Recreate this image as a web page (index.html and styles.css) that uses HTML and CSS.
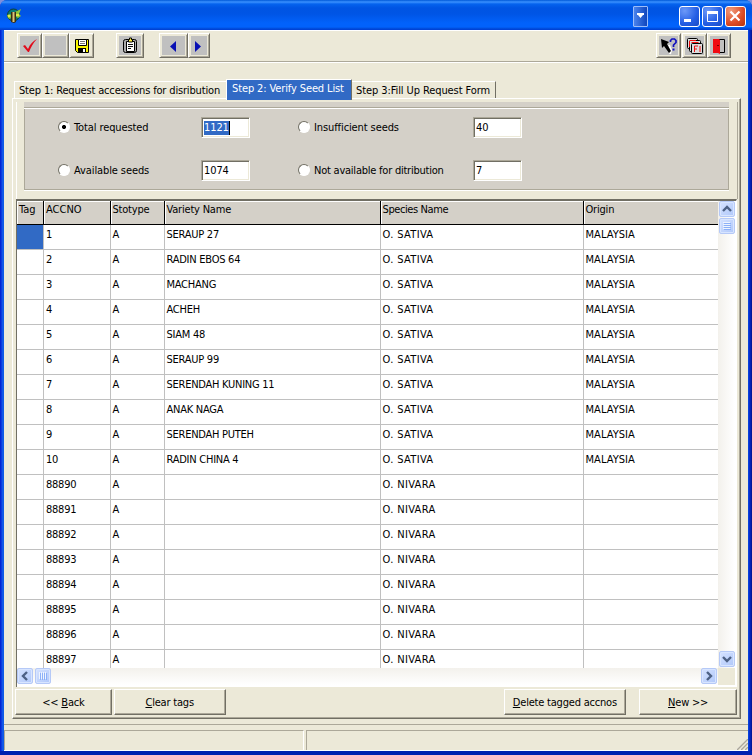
FILE: index.html
```
<!DOCTYPE html>
<html lang="en">
<head>
<meta charset="utf-8">
<title>Verify Seed List</title>
<link rel="stylesheet" href="styles.css">
</head>
<body>
<div class="window">
  <header class="titlebar">
    <svg class="logo" width="17" height="17" viewBox="0 0 17 17"><circle cx="7.500" cy="8" r="6" fill="#087c79" stroke="#123d31"/><path d="M1 8l3-1 2 2-2 3-2-1zM9 5l6-3-2 5 2 2-3 2-3-2z" fill="#8fc53c"/><path d="M2 8h2v2H2zM10 7h3v2h-3z" fill="#e0e84a"/><path d="M5 5h5v10l-2 1-3-1z" fill="#3a2c12"/><path d="M7.500 5v10" stroke="#d8c47a" stroke-width="2"/></svg>
    <span class="drop"><svg width="15" height="20"><path d="M3 6h7v2H9L6.500 11 4 8H3z" fill="#fff"/></svg></span>
    <span class="winbtn first"><svg width="19" height="19"><path d="M4 12h7v3H4z" fill="#fff"/></svg></span>
    <span class="winbtn"><svg width="19" height="19"><path d="M4.500 5.500h10v9h-10z" fill="none" stroke="#fff"/><path d="M4 4h11v3H4z" fill="#fff"/></svg></span>
    <span class="winbtn close"><svg width="19" height="19"><path d="M4.500 4.500l9 9m0-9l-9 9" stroke="#fff" stroke-width="2.200"/></svg></span>
  </header>
  <main class="client">
    <div class="toolbar">
      <span class="tool t1"><svg width="20" height="20"><path d="M3 10l2-1 3 4c2-5 5-8 9-10-4 4-6 8-8 13H8z" fill="#e10b1b"/></svg></span>
      <span class="tool t2"></span>
      <span class="tool t3"><svg width="18" height="20"><path d="M2.500 3.500h13v13h-11l-2-2z" fill="#f8f500" stroke="#000"/><path d="M5.500 3.500h8v6h-8z" fill="#fff" stroke="#000"/><path d="M7 5.500h5M7 7.500h5" stroke="#777"/><path d="M5 12h8v4H5z" fill="#000"/><path d="M10 13h2v3h-2z" fill="#fff"/></svg></span>
      <span class="tool t4"><svg width="20" height="20"><rect x="3.500" y="3.500" width="13" height="13" rx="2" fill="#aaa" stroke="#000"/><path d="M6.500 5.500h8v10h-8z" fill="#fff" stroke="#000"/><path d="M8.500 5V3.500h1V2h2v1.500h1V6h-4z" fill="#ffee45" stroke="#000"/><path d="M8 8.500h5M8 10.500h5M8 12.500h3" stroke="#111"/></svg></span>
      <span class="tool t5"><svg width="20" height="20"><path d="M12 5v11l-6-5.500z" fill="#0810b4"/></svg></span>
      <span class="tool t6"><svg width="20" height="20"><path d="M6 5v11l6-5.500z" fill="#0810b4"/></svg></span>
      <span class="tool t7"><svg width="22" height="20"><path d="M11 9l2 5-1 4" fill="none" stroke="#fff" stroke-width="2"/><path d="M3 3l8 3-2 2 4 7-2 2-5-7-2 2z" fill="#000"/><path d="M12.500 6V4.500l1.500-1.500h2.500L18 4.500v2L15.500 9v2" fill="none" stroke="#1010c0" stroke-width="1.700"/><path d="M14.500 12.500h2v2h-2z" fill="#1010c0"/></svg></span>
      <span class="tool t8"><svg width="20" height="20"><g fill="#ddd" stroke="#000"><rect x="2.500" y="2.500" width="10" height="10" rx="1"/><rect x="4.500" y="4.500" width="11" height="11" rx="1"/><rect x="6.500" y="7.500" width="11" height="10" rx="1"/></g><path d="M5 4.500h6M4.500 5v6M6.500 6.500h7" stroke="#e11" fill="none"/><path d="M9.500 16v-6H13m-3.500 3H12m3-3v6" stroke="#e11" fill="none"/></svg></span>
      <span class="tool t9"><svg width="20" height="20"><path d="M5.500 3.500h10v13h-10z" fill="#c0c0c0" stroke="#000"/><path d="M4 3h6l1 1v14l-2-1H4z" fill="#f00b12"/><path d="M8 9.500h2" stroke="#720000"/></svg></span>
    </div>
    <nav class="tabs">
      <span class="tab one"><b class="w1">Step 1: Request accessions for disribution</b></span>
      <span class="tab active"><b class="w2">Step 2: Verify Seed List</b></span>
      <span class="tab three"><b class="w3">Step 3:Fill Up Request Form</b></span>
    </nav>
    <section class="page">
      <div class="panel">
        <div class="summary">
          <fieldset class="filters">
            <label><i class="radio on"></i>Total requested</label><span class="field"><mark>1121</mark></span>
            <label><i class="radio"></i>Insufficient seeds</label><span class="field">40</span>
            <label><i class="radio"></i>Available seeds</label><span class="field">1074</span>
            <label class="long"><i class="radio"></i>Not available for ditribution</label><span class="field">7</span>
          </fieldset>
        </div>
        <div class="grid">
          <div class="viewport">
          <table>
            <colgroup><col class="c1"><col class="c2"><col class="c3"><col class="c4"><col class="c5"><col class="c6"></colgroup>
            <thead><tr><th>Tag<th>ACCNO<th>Stotype<th>Variety Name<th>Species Name<th>Origin</tr></thead>
            <tbody>
            <tr><td class="picked"><td>1<td>A<td>SERAUP 27<td>O. SATIVA<td>MALAYSIA</tr>
            <tr><td><td>2<td>A<td>RADIN EBOS 64<td>O. SATIVA<td>MALAYSIA</tr>
            <tr><td><td>3<td>A<td>MACHANG<td>O. SATIVA<td>MALAYSIA</tr>
            <tr><td><td>4<td>A<td>ACHEH<td>O. SATIVA<td>MALAYSIA</tr>
            <tr><td><td>5<td>A<td>SIAM 48<td>O. SATIVA<td>MALAYSIA</tr>
            <tr><td><td>6<td>A<td>SERAUP 99<td>O. SATIVA<td>MALAYSIA</tr>
            <tr><td><td>7<td>A<td>SERENDAH KUNING 11<td>O. SATIVA<td>MALAYSIA</tr>
            <tr><td><td>8<td>A<td>ANAK NAGA<td>O. SATIVA<td>MALAYSIA</tr>
            <tr><td><td>9<td>A<td>SERENDAH PUTEH<td>O. SATIVA<td>MALAYSIA</tr>
            <tr><td><td>10<td>A<td>RADIN CHINA 4<td>O. SATIVA<td>MALAYSIA</tr>
            <tr><td><td>88890<td>A<td><td>O. NIVARA<td></tr>
            <tr><td><td>88891<td>A<td><td>O. NIVARA<td></tr>
            <tr><td><td>88892<td>A<td><td>O. NIVARA<td></tr>
            <tr><td><td>88893<td>A<td><td>O. NIVARA<td></tr>
            <tr><td><td>88894<td>A<td><td>O. NIVARA<td></tr>
            <tr><td><td>88895<td>A<td><td>O. NIVARA<td></tr>
            <tr><td><td>88896<td>A<td><td>O. NIVARA<td></tr>
            <tr><td><td>88897<td>A<td><td>O. NIVARA<td></tr>
            </tbody>
          </table>
          </div>
          <div class="vscroll">
            <span class="sb"><svg width="14" height="14"><path d="M3 9l4-4 4 4" class="arrow"/></svg></span>
            <span class="sb thumb"><svg width="14" height="14"><path d="M3 3.500h7M3 5.500h7M3 7.500h7M3 9.500h7" stroke="#eef4fe"/><path d="M4 4.500h7M4 6.500h7M4 8.500h7M4 10.500h7" stroke="#8cb0f8"/></svg></span>
            <span class="sb last"><svg width="14" height="14"><path d="M3 5l4 4 4-4" class="arrow"/></svg></span>
          </div>
          <div class="hscroll">
            <span class="sb"><svg width="14" height="14"><path d="M9 3L5 7l4 4" class="arrow"/></svg></span>
            <span class="sb thumb"><svg width="14" height="14"><path d="M3.500 3v7M5.500 3v7M7.500 3v7M9.500 3v7" stroke="#eef4fe"/><path d="M4.500 4v7M6.500 4v7M8.500 4v7M10.500 4v7" stroke="#8cb0f8"/></svg></span>
            <span class="sb last"><svg width="14" height="14"><path d="M5 3l4 4-4 4" class="arrow"/></svg></span>
          </div>
          <div class="corner"></div>
        </div>
      </div>
      <div class="actions">
        <button class="back">&lt;&lt; <u>B</u>ack</button>
        <button class="clear"><u>C</u>lear tags</button>
        <button class="delete"><u>D</u>elete tagged accnos</button>
        <button class="new"><u>N</u>ew &gt;&gt;</button>
      </div>
    </section>
    <footer class="status">
      <span class="left"></span><span class="right"><svg width="13" height="13"><path d="M1 13L13 1M5 13l8-8M9 13l4-4" stroke="#fff"/><path d="M2 13L13 2M6 13l7-7M10 13l3-3" stroke="#aca899" stroke-width="1.500"/></svg></span>
    </footer>
  </main>
</div>
</body>
</html>
```
FILE: styles.css
```
* { box-sizing: border-box; }
body { margin: 0; background: #7f8fdc; color: #000; font: 11px/13px "DejaVu Sans Condensed", "DejaVu Sans", sans-serif; letter-spacing: -0.2px; font-stretch: condensed; }
svg { display: block; }
.window { width: 752px; height: 755px; padding: 0 4px 4px; display: flex; flex-direction: column; border-radius: 7px 7px 0 0; background: linear-gradient(90deg, #0019cf, #1661ed 3px, #0855dd 4px, #0855dd 748px, #0831d9 749px, #00138c); }
.window { box-shadow: inset 0 -4px #0020b0; }
.titlebar { height: 30px; margin: 0 -4px; padding: 6px 5px 0 6px; display: flex; align-items: flex-start; border-radius: 7px 7px 0 0; background: linear-gradient(#0058d8 0, #3b91ff 2px, #0563ee 4px, #0054e3 8px, #0055e5 14px, #0262fb 23px, #0262fb 27px, #0047d4 29px, #003dd7); }
.logo { margin-top: 1px; }
.drop { width: 15px; height: 21px; margin-left: 610px; border: 1px solid #9dbdf9; border-radius: 1px; background: linear-gradient(90deg, #4a83ed, #0f46bd); }
.winbtn { width: 21px; height: 21px; margin-left: 2px; border: 1px solid #fff; border-radius: 3px; background: radial-gradient(circle at 25% 20%, #6c99f8, #245ee4 60%, #1a4bc4); }
.winbtn.first { margin-left: 31px; }
.winbtn.close { background: radial-gradient(circle at 25% 20%, #f09b7b, #dc4b26 60%, #b5320e); }
.client { height: 721px; background: #ece9d8; display: flex; flex-direction: column; }
.toolbar { height: 32px; padding: 2px 17px 0 13px; display: flex; align-items: flex-start; border-top: 1px solid #fff; border-bottom: 1px solid #aca899; box-shadow: 0 1px #fff; margin-bottom: 1px; }
.tool { height: 25px; background: #c0c0c0; border: 1px solid; border-color: #fff #716f64 #716f64 #fff; box-shadow: inset 1px 1px #ece9d8, inset -1px -1px #aca899, inset 0 0 0 2px #ece9d8; display: flex; justify-content: center; align-items: center; }
.t1 { width: 25px; } .t2 { width: 27px; } .t3 { width: 25px; background: #ece9d8; }
.t4 { width: 28px; margin-left: 22px; } .t5 { width: 29px; margin-left: 15px; } .t6 { width: 22px; }
.t7 { width: 25px; margin-left: 446px; } .t8 { width: 25px; margin-left: 1px; } .t9 { width: 24px; }
.tabs { height: 35px; padding-left: 10px; display: flex; align-items: flex-end; }
.tab { height: 17px; padding: 2px 0 0 4px; white-space: nowrap; border-left: 1px solid #fff; border-top: 1px solid #fff; }
.tab b { font-weight: 400; }
.one { width: 212px; }
.tab.active { width: 126px; height: 21px; margin-bottom: -2px; padding-left: 5px; background: #316ac5; color: #fff; border-right: 1px solid #716f64; position: relative; }
.three { width: 144px; padding-left: 4px; border-left: 0; border-right: 1px solid #716f64; }
.w1 { letter-spacing: -0.16px; }
.w2 { letter-spacing: -0.12px; }
.w3 { letter-spacing: -0.09px; }
.page { width: 729px; height: 621px; margin-left: 8px; padding: 3px 3px 0 2px; border: 1px solid; border-color: #fff #716f64 #716f64 #fff; box-shadow: inset -1px -1px #aca899; }
.panel { width: 722px; margin-left: 1px; }
.summary { height: 97px; padding: 0 8px 0 7px; border-left: 1px solid #fff; border-right: 1px solid #aca899; }
.filters { height: 88px; margin: 0; padding: 15px 0 0 34px; border: 0; background: linear-gradient(#aca899, #aca899) 0 5px / 100% 1px no-repeat, linear-gradient(#fff, #fff) 0 6px / 100% 1px no-repeat, linear-gradient(#aca899, #aca899) 0 87px / 100% 1px no-repeat, linear-gradient(#aca899, #aca899) 0 5px / 1px 83px no-repeat, linear-gradient(#aca899, #aca899) 100% 5px / 1px 83px no-repeat, #d4d0c8; box-shadow: 0 1px #fff; display: grid; grid-template-columns: 143px 97px 175px 50px; grid-template-rows: 21px 21px; row-gap: 22px; }
.filters label { display: flex; align-items: center; white-space: nowrap; letter-spacing: -0.1px; margin-top: -1px; }
.filters label.long { letter-spacing: -0.23px; }
.radio { width: 12px; height: 12px; margin-right: 4px; border: 1px solid; border-color: #716f64 #fff #fff #716f64; border-radius: 50%; background: #fff; }
.radio.on { background: radial-gradient(circle, #000 0 1.8px, #fff 2.3px); }
.field { width: 49px; height: 21px; padding: 3px 0 0 2px; background: #fff; border: 1px solid; border-color: #aca899 #fff #fff #aca899; box-shadow: inset 1px 1px #716f64, inset -1px -1px #ece9d8; letter-spacing: -0.1px; }
.field mark { display: inline-block; height: 14px; margin-top: -1px; background: #316ac5; color: #fff; border-right: 1px solid #000; }
.grid { width: 721px; height: 488px; background: #fff; border-top: 2px solid #716f64; border-left: 1px solid #716f64; border-right: 1px solid #fff; display: grid; grid-template-columns: 701px 17px; grid-template-rows: 467px 17px; }
.viewport { overflow: hidden; }
table { width: 701px; border-collapse: separate; border-spacing: 0; table-layout: fixed; }
.c1 { width: 27px; } .c2 { width: 67px; } .c3 { width: 54px; } .c4 { width: 216px; } .c5 { width: 203px; } .c6 { width: 134px; }
th, td { height: 25px; padding: 2px 0 0 2px; vertical-align: top; text-align: left; font-weight: 400; white-space: nowrap; border-right: 1px solid #c0c0c0; border-bottom: 1px solid #c0c0c0; }
th { height: 24px; background: #d4d0c8; border-right-color: #000; border-bottom-color: #000; box-shadow: inset 1px 1px #fff; letter-spacing: -0.2px; }
th:nth-child(-n+2) { letter-spacing: 0; }
th:nth-child(5) { letter-spacing: -0.4px; }
td { padding-top: 3px; letter-spacing: -0.25px; }
td:nth-child(5) { letter-spacing: 0.35px; }
td:nth-child(6) { letter-spacing: 0.05px; }
th:nth-child(n+3), td:nth-child(n+3) { padding-left: 1.5px; }
th:last-child, td:last-child { border-right: 0; }
.picked { background: #316ac5; }
.vscroll { display: flex; flex-direction: column; background: linear-gradient(90deg, #f3f1ec, #fff); }
.hscroll { display: flex; background: linear-gradient(#f3f1ec, #fff); }
.sb { width: 16px; height: 16px; margin: 0 0 1px 1px; flex: none; border: 1px solid #b5c9f7; border-radius: 2px; background: linear-gradient(135deg, #d5e2ff, #b0c8fa); box-shadow: inset 0 0 0 1px #d8e5ff; }
.vscroll .last { margin-top: auto; }
.hscroll .sb { margin-left: 0; margin-right: 2px; }
.hscroll .last { margin-left: auto; margin-right: 1px; }
.arrow { fill: none; stroke: #4d6185; stroke-width: 2.4; }
.corner { background: #ece9d8; }
.actions { height: 28px; display: flex; padding-top: 2px; }
button { height: 26px; padding: 0; font: inherit; letter-spacing: -0.2px; color: #000; background: #ece9d8; border: 1px solid; border-color: #fff #716f64 #716f64 #fff; box-shadow: inset -1px -1px #aca899; }
.back { width: 97px; } .clear { width: 112px; margin-left: 2px; } .delete { width: 123px; margin-left: 278px; } .new { width: 98px; margin-left: 13px; }
.status { height: 27px; margin-top: 5px; padding-top: 5px; display: flex; border-top: 1px solid #aca899; border-bottom: 1px solid #fff; }
.status span { border-top: 1px solid #aca899; border-left: 1px solid #aca899; }
.status .left { width: 300px; border-right: 1px solid #fff; margin-right: 2px; }
.status .right { flex: 1; display: flex; justify-content: flex-end; align-items: flex-end; }
```
